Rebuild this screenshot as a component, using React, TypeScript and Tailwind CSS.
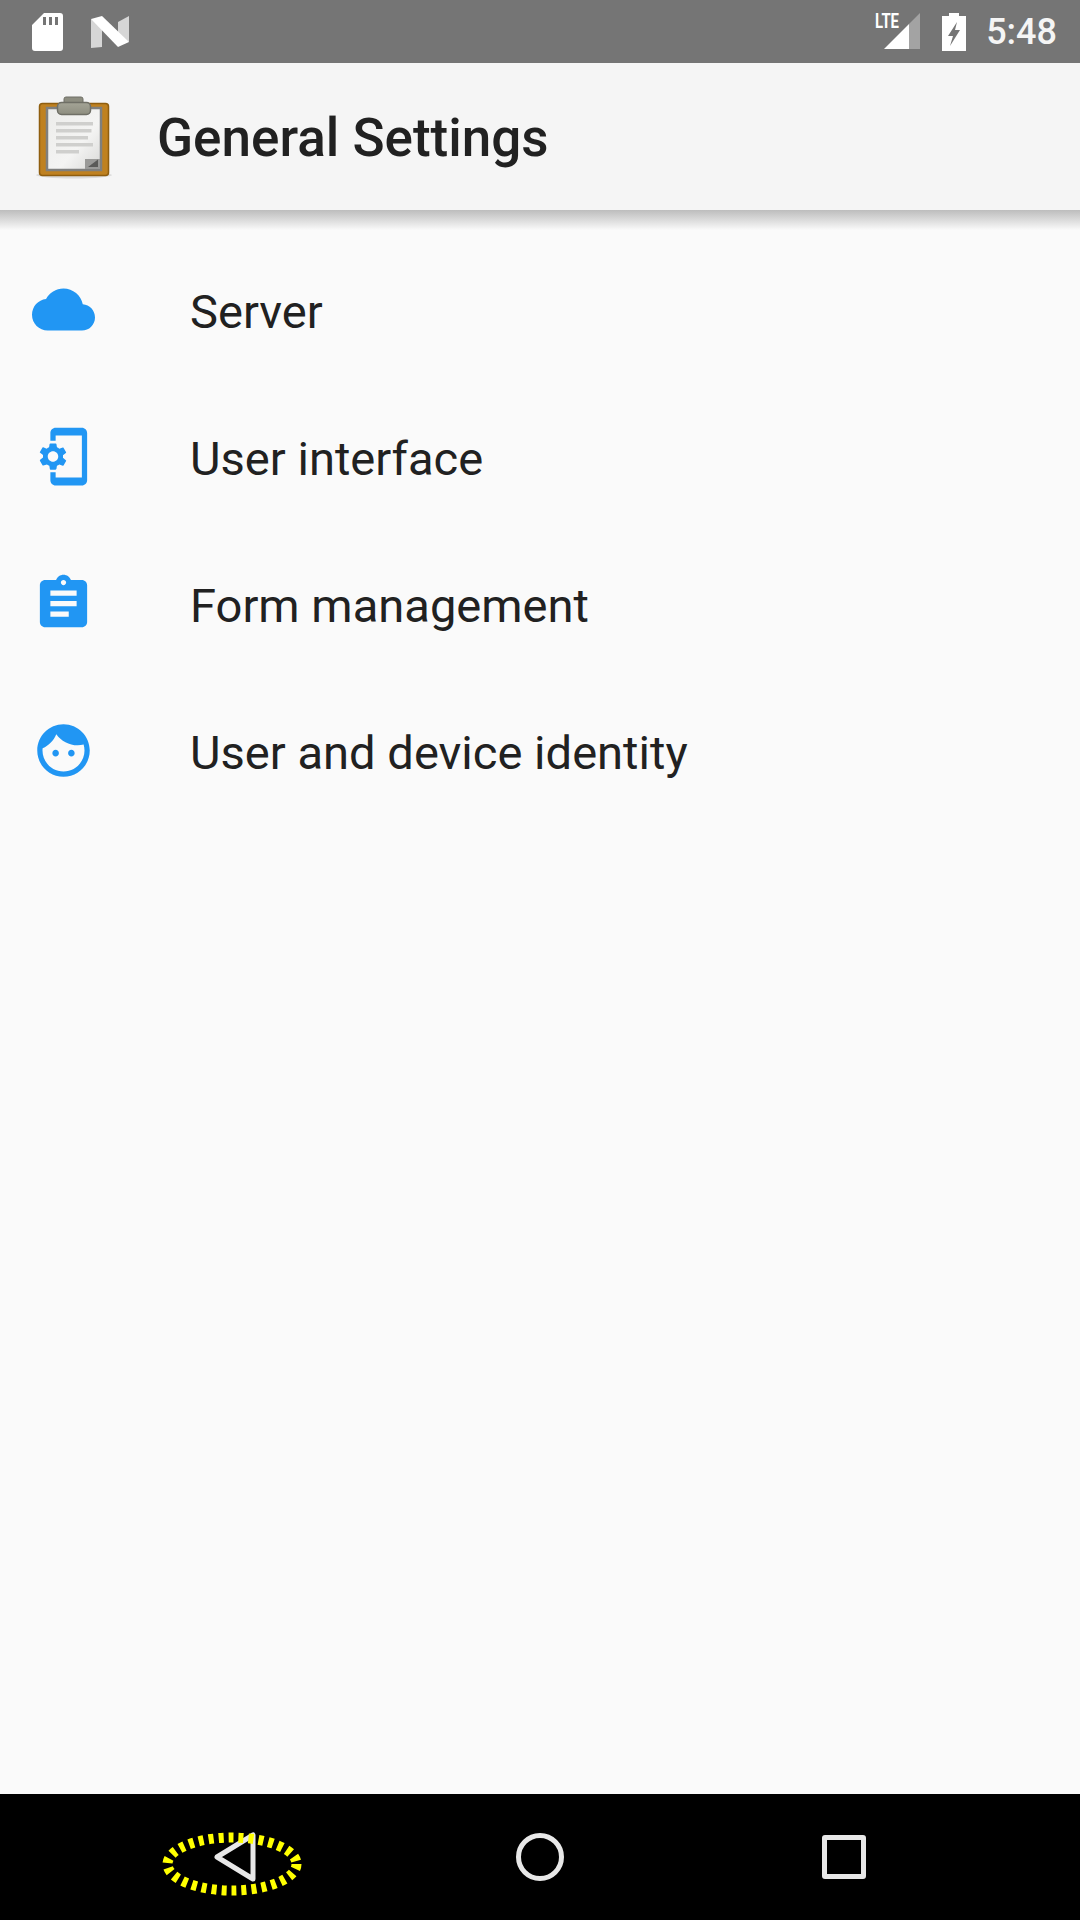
import React from 'react';

const rows = [
  {
    label: 'Server',
    d: 'M19.35 10.04C18.67 6.59 15.64 4 12 4 9.11 4 6.6 5.64 5.35 8.04 2.34 8.36 0 10.91 0 14c0 3.31 2.69 6 6 6h13c2.76 0 5-2.24 5-5 0-2.64-2.05-4.78-4.65-4.96z',
  },
  {
    label: 'User interface',
    d: 'M11.8 12.5v-1l1.1-.8c.1-.1.1-.2.1-.3l-1-1.7c-.1-.1-.2-.2-.3-.1l-1.3.4c-.3-.2-.6-.4-.9-.5l-.2-1.3c0-.1-.1-.2-.3-.2H7c-.1 0-.2.1-.3.2l-.2 1.3c-.3.1-.6.3-.9.5l-1.3-.5c-.1 0-.2 0-.3.1l-1 1.7c-.1.1 0 .2.1.3l1.1.8v1l-1.1.8c-.1.2-.1.3-.1.4l1 1.7c.1.1.2.2.3.1l1.4-.4c.3.2.6.4.9.5l.2 1.3c-.1.1.1.2.2.2h2c.1 0 .2-.1.3-.2l.2-1.3c.3-.1.6-.3.9-.5l1.3.5c.1 0 .2 0 .3-.1l1-1.7c.1-.1 0-.2-.1-.3l-1.1-.9zM8 14c-1.1 0-2-.9-2-2s.9-2 2-2 2 .9 2 2-.9 2-2 2zM19 1H9c-1.1 0-2 .9-2 2v3h2V4h10v16H9v-2H7v3c0 1.1.9 2 2 2h10c1.1 0 2-.9 2-2V3c0-1.1-.9-2-2-2z',
  },
  {
    label: 'Form management',
    d: 'M19 3h-4.18C14.4 1.84 13.3 1 12 1c-1.3 0-2.4.84-2.82 2H5c-1.1 0-2 .9-2 2v14c0 1.1.9 2 2 2h14c1.1 0 2-.9 2-2V5c0-1.1-.9-2-2-2zm-7 0c.55 0 1 .45 1 1s-.45 1-1 1-1-.45-1-1 .45-1 1-1zm2 14H7v-2h7v2zm3-4H7v-2h10v2zm0-4H7V7h10v2z',
  },
  {
    label: 'User and device identity',
    d: 'M9 11.75c-.69 0-1.25.56-1.25 1.25s.56 1.25 1.25 1.25 1.25-.56 1.25-1.25-.56-1.25-1.25-1.25zm6 0c-.69 0-1.25.56-1.25 1.25s.56 1.25 1.25 1.25 1.25-.56 1.25-1.25-.56-1.25-1.25-1.25zM12 2C6.48 2 2 6.48 2 12s4.48 10 10 10 10-4.48 10-10S17.52 2 12 2zm0 18c-4.41 0-8-3.59-8-8 0-.29.02-.58.05-.86 2.36-1.05 4.23-2.98 5.21-5.37C11.07 8.33 14.05 10 17.42 10c.78 0 1.53-.09 2.25-.26.21.71.33 1.47.33 2.26 0 4.41-3.59 8-8 8z',
  },
];

// coordinates in the viewBox are the screen pixels of the original logo
const ClipboardLogo = () => (
  <svg width="84" height="96" viewBox="32 88 84 96" className="shrink-0">
    <defs>
      <linearGradient id="paper" x1="0" y1="0" x2="1" y2="1">
        <stop offset="0" stopColor="#ececea" />
        <stop offset="0.6" stopColor="#f4f4f3" />
        <stop offset="1" stopColor="#d8d8d6" />
      </linearGradient>
      <linearGradient id="clip" x1="0" y1="0" x2="0" y2="1">
        <stop offset="0" stopColor="#a4a496" />
        <stop offset="1" stopColor="#8e8e80" />
      </linearGradient>
    </defs>
    <ellipse cx="74" cy="174" rx="38" ry="3.5" fill="#000" opacity="0.1" />
    <rect x="39.5" y="102.5" width="69" height="72" rx="3" fill="#bf8120" stroke="#8f5e0f" strokeWidth="1.5" />
    <rect x="47" y="107" width="54" height="62" fill="url(#paper)" stroke="#7f7f7d" strokeWidth="2.5" />
    <rect x="64" y="96" width="19" height="10" rx="2" fill="#8d8d80" stroke="#6f6f66" />
    <rect x="57.5" y="101.5" width="33" height="12" rx="4" fill="url(#clip)" stroke="#6f6f66" strokeWidth="1.5" />
    <rect x="56" y="121" width="37" height="3.5" fill="#cfcfcd" />
    <rect x="56" y="128" width="35.5" height="3.5" fill="#cfcfcd" />
    <rect x="56" y="135" width="32" height="3.5" fill="#cfcfcd" />
    <rect x="56" y="142" width="37" height="3.5" fill="#cfcfcd" />
    <rect x="56" y="149" width="23" height="3.5" fill="#cfcfcd" />
    <path d="M85 168V158H100V168Z" fill="#9a9a98" />
    <path d="M88 166L98 158.5V166Z" fill="#5a5a58" />
  </svg>
);

export default function App() {
  return (
    <div className="w-[1080px] h-[1920px] flex flex-col bg-[#fafafa] font-['Roboto',sans-serif] overflow-hidden">
      {/* status bar */}
      <div className="h-[63px] shrink-0 bg-[#757575] flex items-center pl-[32px] pr-[23px]">
        <svg width="31" height="38" viewBox="0 0 31 38" className="shrink-0">
          <path
            fill="#fff"
            fillRule="evenodd"
            d="M12 0H28Q31 0 31 3V35Q31 38 28 38H3Q0 38 0 35V12ZM11 4V12H14V4ZM17 4V12H20V4ZM23 4V12H26V4Z"
          />
        </svg>
        <svg width="40" height="32" viewBox="0 0 40 32" className="shrink-0 ml-[28px]">
          <path fill="#d6d6d6" d="M0 3L11 9V31L0 32Z" />
          <path fill="#d6d6d6" d="M27 6L38 0V26L27 22Z" />
          <path fill="#fff" d="M0 3L11 0L38 26L27 31Z" />
        </svg>
        <div className="flex-1" />
        <svg width="47" height="49" viewBox="0 -6 47 49" className="shrink-0">
          <path fill="#fff" d="M11 36L36 11V36Z" />
          <path fill="#a3a3a3" d="M36 11L47 0V36H36Z" />
          <text x="2" y="15" fill="#fff" fontFamily="Roboto" fontWeight="700" fontSize="19.5" textLength="24" lengthAdjust="spacingAndGlyphs">
            LTE
          </text>
        </svg>
        <svg width="24" height="38" viewBox="0 0 24 38" className="shrink-0 ml-[22px]">
          <path
            fill="#fff"
            fillRule="evenodd"
            d="M7 0H17V3H24V38H0V3H7ZM15 9L6 23H11L8 33L18 17H13Z"
          />
        </svg>
        <span className="ml-[20px] text-[36px] leading-none font-medium text-[#f5f5f5]">5:48</span>
      </div>

      {/* toolbar */}
      <div className="relative h-[147px] shrink-0 bg-[#f5f5f5] flex items-center pl-[32px]">
        <ClipboardLogo />
        <h1 className="ml-[41px] mt-[4px] text-[53px] font-medium text-[#212121]">General Settings</h1>
        <div className="absolute left-0 right-0 top-full h-[20px] bg-gradient-to-b from-[#bdbdbd] to-[#fafafa]" />
      </div>

      {/* settings list */}
      <div className="flex-1 flex flex-col pt-[26px]">
        {rows.map((row) => (
          <div key={row.label} className="h-[147px] flex items-center pl-[32px]">
            <svg width="63" height="63" viewBox="0 0 24 24" fill="#2196f3" className="shrink-0">
              <path d={row.d} />
            </svg>
            <span className="ml-[95px] mt-[6px] text-[47.1px] text-[#212121]">{row.label}</span>
          </div>
        ))}
      </div>

      {/* navigation bar */}
      <div className="h-[126px] shrink-0 bg-black flex justify-center items-center pb-[1px]">
        <div className="relative w-[305px] flex justify-center">
          <svg width="42" height="50" viewBox="0 0 42 50">
            <path d="M39 3V47L3 25Z" fill="none" stroke="#e8e8e8" strokeWidth="5" strokeLinejoin="round" />
          </svg>
          <svg width="140" height="72" viewBox="0 0 140 72" className="absolute left-[79px] top-[-4px]">
            <ellipse cx="70" cy="36" rx="64.5" ry="26.5" fill="none" stroke="#ffff00" strokeWidth="10" strokeDasharray="5 5" />
          </svg>
        </div>
        <div className="w-[305px] flex justify-center">
          <div className="w-[48px] h-[48px] rounded-full border-[5px] border-[#e8e8e8]" />
        </div>
        <div className="w-[305px] flex justify-center pr-[2px]">
          <div className="w-[44px] h-[44px] rounded-[3px] border-[5px] border-[#e8e8e8]" />
        </div>
      </div>
    </div>
  );
}
